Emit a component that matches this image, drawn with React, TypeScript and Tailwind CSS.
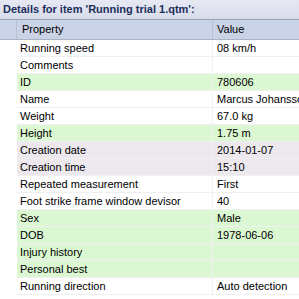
const rows: { name: string; value: string; tone: "white" | "green" | "lilac" }[] = [
  { name: "Running speed", value: "08 km/h", tone: "white" },
  { name: "Comments", value: "", tone: "white" },
  { name: "ID", value: "780606", tone: "green" },
  { name: "Name", value: "Marcus Johansson", tone: "white" },
  { name: "Weight", value: "67.0 kg", tone: "white" },
  { name: "Height", value: "1.75 m", tone: "green" },
  { name: "Creation date", value: "2014-01-07", tone: "lilac" },
  { name: "Creation time", value: "15:10", tone: "lilac" },
  { name: "Repeated measurement", value: "First", tone: "white" },
  { name: "Foot strike frame window devisor", value: "40", tone: "white" },
  { name: "Sex", value: "Male", tone: "green" },
  { name: "DOB", value: "1978-06-06", tone: "green" },
  { name: "Injury history", value: "", tone: "green" },
  { name: "Personal best", value: "", tone: "green" },
  { name: "Running direction", value: "Auto detection", tone: "white" },
]

const toneBg = {
  white: "bg-white",
  green: "bg-[#dcf8d2]",
  lilac: "bg-[#ece8ee]",
}

export default function App() {
  return (
    <div className="w-[299px] h-[299px] overflow-hidden bg-white text-[11px] text-black font-['Liberation_Sans',Arial,sans-serif]">
      <div className="h-[19px] flex items-center pl-[3px] bg-gradient-to-b from-[#e6e9f3] to-[#d8dcea] font-bold text-[#1b2f5c] whitespace-nowrap">
        Details for item 'Running trial 1.qtm':
      </div>
      <div className="h-[21px] flex border-t border-[#9aa3bd] border-b border-b-[#aab2c8] bg-[#cad2e6]">
        <div className="w-[17px] shrink-0 border-r border-[#b8c0d6]" />
        <div className="w-[196px] shrink-0 flex items-center pl-[5px] border-r border-[#b8c0d6]">Property</div>
        <div className="flex-1 flex items-center pl-[4px]">Value</div>
      </div>
      {rows.map((r) => (
        <div key={r.name} className="h-[17px] flex">
          <div className="w-[17px] shrink-0 bg-white" />
          <div className={`flex-1 flex border-b border-[#f0f0f0] ${toneBg[r.tone]}`}>
            <div className="w-[196px] shrink-0 flex items-center pl-[3px] border-r border-[#f0f0f0] whitespace-nowrap overflow-hidden">
              {r.name}
            </div>
            <div className="flex-1 flex items-center pl-[4px] whitespace-nowrap overflow-hidden">{r.value}</div>
          </div>
        </div>
      ))}
    </div>
  )
}
